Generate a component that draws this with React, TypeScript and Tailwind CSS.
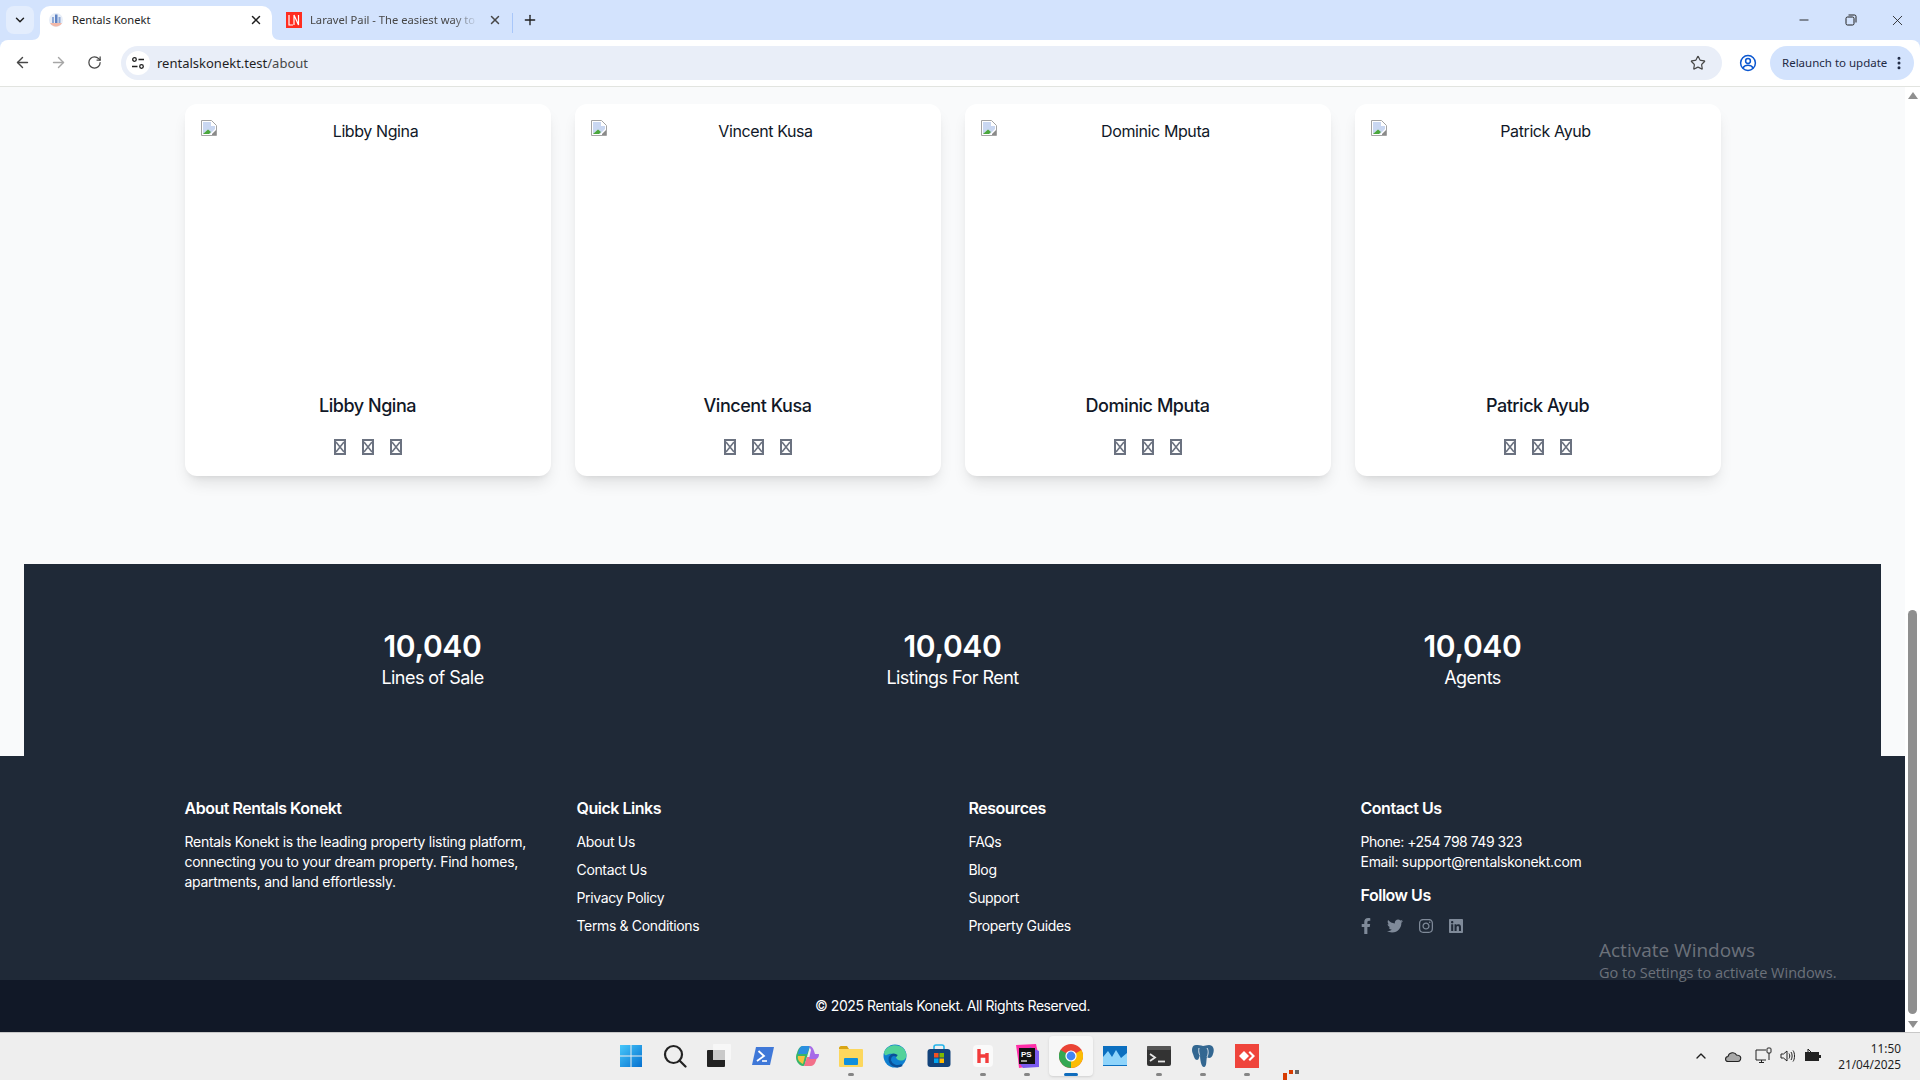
import React from "react";
import { ArrowLeft, ArrowRight, RotateCw, Star, X, Plus, ChevronDown, ChevronUp, Minus, EllipsisVertical } from "lucide-react";
import { FaFacebookF, FaTwitter, FaInstagram, FaLinkedin } from "react-icons/fa";

const people = ["Libby Ngina", "Vincent Kusa", "Dominic Mputa", "Patrick Ayub"];
const stats = [
  ["10,040", "Lines of Sale"],
  ["10,040", "Listings For Rent"],
  ["10,040", "Agents"],
];

function BrokenImage() {
  return (
    <svg width="16" height="16" viewBox="0 0 16 16" className="shrink-0">
      <path d="M0.5 0.5H10.5L15.5 5.5V15.5H0.5Z" fill="#fff" stroke="#a3a3a3" />
      <path d="M2 2H10V6H14V9L9 14H2Z" fill="#c9d7f1" />
      <path d="M2 14L7 9.5L10 12L8 14Z" fill="#4ca83c" />
      <path d="M11 14L15 10V15H11Z" fill="#8a8a8a" />
    </svg>
  );
}

function Tofu() {
  return (
    <svg width="12" height="16" viewBox="0 0 12 16" className="text-[#6b7280]">
      <rect x="1" y="1" width="10" height="14" fill="none" stroke="currentColor" strokeWidth="2" />
      <path d="M2 3L10 13M10 3L2 13" stroke="currentColor" strokeWidth="1.6" />
    </svg>
  );
}

function Card({ name }: { name: string }) {
  return (
    <div className="bg-white rounded-xl shadow-lg p-4 text-center">
      <div className="h-64 flex items-start mb-4">
        <BrokenImage />
        <span className="flex-1 text-base text-gray-900 leading-[23px] tracking-[-0.025em]">{name}</span>
      </div>
      <h3 className="text-lg leading-7 font-medium tracking-[-0.025em] text-[#111827]">{name}</h3>
      <div className="mt-[15px] mb-px h-6 flex items-center justify-center gap-4">
        <Tofu />
        <Tofu />
        <Tofu />
      </div>
    </div>
  );
}

function Stat({ value, label }: { value: string; label: string }) {
  return (
    <div className="text-center text-white">
      <div className="text-3xl leading-9 font-semibold">{value}</div>
      <div className="text-lg leading-7 tracking-[-0.03em]">{label}</div>
    </div>
  );
}

function FooterLinks({ title, links }: { title: string; links: string[] }) {
  return (
    <div>
      <h4 className="text-base leading-6 font-semibold mb-3 tracking-[-0.03em]">{title}</h4>
      <ul className="flex flex-col gap-2 text-sm leading-5 tracking-[-0.025em]">
        {links.map((l) => (
          <li key={l}>{l}</li>
        ))}
      </ul>
    </div>
  );
}

function TabBar() {
  return (
    <div className="h-10 bg-[#d3e3fd] flex items-start font-['Noto_Sans',sans-serif] text-[11.2px]">
      <div className="w-7 h-7 mt-1.5 ml-1.5 rounded-lg bg-[#e3edfd] flex items-center justify-center text-[#1f1f1f]">
        <ChevronDown size={14} strokeWidth={2.5} />
      </div>
      <div className="relative ml-1.5 mt-1.5 w-[232px] h-[34px] bg-white rounded-t-[10px] flex items-center pl-2 pr-[9px] pb-[6px] text-[#1f1f1f]">
        <svg width="8" height="8" viewBox="0 0 8 8" className="absolute -left-2 bottom-0">
          <path d="M8 0V8H0C5 8 8 5 8 0Z" fill="#fff" />
        </svg>
        <svg width="8" height="8" viewBox="0 0 8 8" className="absolute -right-2 bottom-0">
          <path d="M0 0V8H8C3 8 0 5 0 0Z" fill="#fff" />
        </svg>
        <svg width="16" height="16" viewBox="0 0 16 16" className="shrink-0">
          <circle cx="8" cy="8" r="7" fill="#e7edf7" />
          <path d="M2 11a7 7 0 0 0 12 0Z" fill="#f2b8a8" />
          <rect x="4" y="5" width="2" height="6" fill="#8fa9d6" />
          <rect x="7" y="2.5" width="2.5" height="8.5" fill="#5f83c4" />
          <rect x="10.5" y="5" width="2" height="6" fill="#8fa9d6" />
        </svg>
        <span className="ml-2 flex-1">Rentals Konekt</span>
        <X size={14} strokeWidth={2.5} />
      </div>
      <div className="mt-1.5 h-7 ml-3.5 w-[226px] flex items-center text-[#474747]">
        <svg width="16" height="16" viewBox="0 0 16 16" className="shrink-0">
          <rect width="16" height="16" fill="#ff2d20" />
          <path d="M3 3V13H7M8 13V3M8 3L12.5 13V3" fill="none" stroke="#fff" strokeWidth="1.2" />
        </svg>
        <span className="ml-2 w-[168px] whitespace-nowrap [mask-image:linear-gradient(to_right,black_85%,transparent)]">Laravel Pail - The easiest way to</span>
        <X size={14} strokeWidth={2.5} className="ml-[10px]" />
      </div>
      <div className="mt-[13px] h-5 w-px bg-[#a8c7fa]" />
      <Plus size={16} strokeWidth={2} className="ml-[9px] mt-[12px] text-[#1f1f1f]" />
      <div className="ml-auto flex h-10 items-center text-[#1f1f1f]">
        <div className="w-[47px] flex justify-center">
          <Minus size={14} strokeWidth={1.6} />
        </div>
        <div className="w-[47px] flex justify-center">
          <svg width="12" height="12" viewBox="0 0 12 12" fill="none" stroke="currentColor" strokeWidth="1">
            <rect x="1" y="3" width="8" height="8" rx="1.5" />
            <path d="M3.5 1H9.5A1.5 1.5 0 0 1 11 2.5V8.5" />
          </svg>
        </div>
        <div className="w-[46px] flex justify-center">
          <X size={17} strokeWidth={1.2} />
        </div>
      </div>
    </div>
  );
}

function Toolbar() {
  return (
    <div className="h-[47px] bg-[#d3e3fd] font-['Noto_Sans',sans-serif]">
      <div className="h-[47px] bg-white rounded-t-lg border-b border-[#e2e4e0] flex items-center text-[#474747] pb-px">
        <ArrowLeft size={17} strokeWidth={2} className="ml-[14px]" />
        <ArrowRight size={17} strokeWidth={2} className="ml-[19px] text-[#a6a6a6]" />
        <RotateCw size={15} strokeWidth={2} className="ml-[20px]" />
        <div className="ml-[19px] w-[1601px] h-[34px] rounded-full bg-[#e9eef8] flex items-center pl-[5px] pr-[16px]">
          <div className="w-6 h-6 rounded-full bg-white flex items-center justify-center">
            <svg width="14" height="14" viewBox="0 0 14 14" fill="none" stroke="#1f1f1f" strokeWidth="1.3">
              <circle cx="3.5" cy="3.5" r="1.8" />
              <path d="M7.5 3.5H13M1 10.5H6.5" />
              <circle cx="10.5" cy="10.5" r="1.8" />
            </svg>
          </div>
          <span className="ml-[7px] text-[13px] text-[#1f1f1f] translate-y-px">
            rentalskonekt.test<span className="text-[#474747]">/about</span>
          </span>
          <Star size={16} strokeWidth={1.8} className="ml-auto text-[#474747]" />
        </div>
        <svg width="18" height="18" viewBox="0 0 18 18" fill="none" stroke="#0b57d0" strokeWidth="1.5" className="ml-[17px]">
          <circle cx="9" cy="9" r="7.4" />
          <circle cx="9" cy="7" r="2.4" />
          <path d="M3.8 14c1.2-2 3-2.8 5.2-2.8s4 .8 5.2 2.8" />
        </svg>
        <div className="ml-[13px] w-[144px] h-[34px] rounded-full bg-[#d3e3fd] flex items-center pl-3 text-[11.5px] text-[#1f2a44]">
          <span>Relaunch to update</span>
          <EllipsisVertical size={16} strokeWidth={2.5} className="ml-auto mr-[7px]" />
        </div>
      </div>
    </div>
  );
}

function Scrollbar() {
  return (
    <div className="w-[15px] bg-white relative shrink-0">
      <svg width="10" height="7" viewBox="0 0 10 7" className="absolute left-[3px] top-[5px]">
        <path d="M5 0L10 7H0Z" fill="#8f8f8f" />
      </svg>
      <div className="absolute left-[3px] w-[9px] top-[523px] h-[404px] bg-[#8f8f8f] rounded-t-full rounded-b-full" />
      <svg width="10" height="7" viewBox="0 0 10 7" className="absolute left-[3px] bottom-[4px]">
        <path d="M0 0H10L5 7Z" fill="#8f8f8f" />
      </svg>
    </div>
  );
}

const taskIcons: { el: React.ReactNode; dot?: boolean }[] = [
  {
    el: (
      <svg width="24" height="24" viewBox="0 0 24 24">
        <defs>
          <linearGradient id="w" x1="0" y1="0" x2="1" y2="1">
            <stop offset="0" stopColor="#47c8fb" />
            <stop offset="1" stopColor="#0570cf" />
          </linearGradient>
        </defs>
        <path d="M1 1H11.5V11.5H1ZM12.5 1H23V11.5H12.5ZM1 12.5H11.5V23H1ZM12.5 12.5H23V23H12.5Z" fill="url(#w)" />
      </svg>
    ),
  },
  {
    el: (
      <svg width="24" height="24" viewBox="0 0 24 24" fill="none" stroke="#222" strokeWidth="2.2">
        <circle cx="10.5" cy="10.5" r="8.5" />
        <path d="M16.5 16.5L22.5 22.5" strokeLinecap="round" />
      </svg>
    ),
  },
  {
    el: (
      <svg width="24" height="24" viewBox="0 0 24 24">
        <rect x="0" y="6" width="18" height="17" rx="1" fill="#222" />
        <rect x="6" y="0" width="18" height="16" rx="1" fill="#f7f7f7" />
        <rect x="6" y="6" width="12" height="10" fill="#c9c9c9" />
      </svg>
    ),
  },
  {
    el: (
      <svg width="24" height="24" viewBox="0 0 24 24">
        <path d="M5 3H23L19 21H1Z" fill="#3f78d8" />
        <path d="M7.5 7L13 12L6 17" fill="none" stroke="#fff" strokeWidth="1.8" />
        <path d="M11 17H16" stroke="#fff" strokeWidth="1.6" />
      </svg>
    ),
  },
  {
    el: (
      <svg width="24" height="24" viewBox="0 0 24 24">
        <path d="M8 2H15L10 20C9 23 7 22 5 21C1 18 0 13 2 9C3 5 5 2 8 2Z" fill="#35b56b" />
        <path d="M8 2H15L12 10H3C4 5 5 2 8 2Z" fill="#2a8fe0" />
        <path d="M16 22H9L12 13H22C21 18 19 22 16 22Z" fill="#f2708a" />
        <path d="M14 2C17 2 18 4 19 7L20 10H24C24 14 22 15 20 15H14L16 6Z" fill="#a66be8" />
        <path d="M3 12H10L8 20C4 18 2 15 3 12Z" fill="#f5c23e" />
      </svg>
    ),
  },
  {
    dot: true,
    el: (
      <svg width="24" height="24" viewBox="0 0 24 24">
        <path d="M0 4C0 3 1 2 2 2H8L10 5H0Z" fill="#d9a514" />
        <rect y="5" width="24" height="18" rx="1" fill="#fcd75d" />
        <rect x="5" y="14" width="14" height="7" rx="1" fill="#0f8fdc" />
      </svg>
    ),
  },
  {
    el: (
      <svg width="24" height="24" viewBox="0 0 24 24">
        <circle cx="12" cy="12" r="11.5" fill="#0f7fd0" />
        <path d="M1 8C4 1 14 -1 20 4C24 8 24 13 22 15C19 18 13 16 13 13C13 10 9 9 6 10C3 11 1.5 13 1 8Z" fill="#53d29a" />
        <path d="M14 12C10 9 6 12 7 17C8 21 14 24 19 21" fill="none" stroke="#0a4f98" strokeWidth="2.5" />
      </svg>
    ),
  },
  {
    el: (
      <svg width="24" height="24" viewBox="0 0 24 24">
        <path d="M7 6V3C7 1.5 8 1 9 1H15C16 1 17 1.5 17 3V6" fill="none" stroke="#23b4ea" strokeWidth="1.6" />
        <rect x="0.5" y="5" width="23" height="18" rx="3" fill="#12427a" />
        <rect x="7" y="9" width="4.5" height="4.5" fill="#f25022" />
        <rect x="12.5" y="9" width="4.5" height="4.5" fill="#7fba00" />
        <rect x="7" y="14.5" width="4.5" height="4.5" fill="#00a4ef" />
        <rect x="12.5" y="14.5" width="4.5" height="4.5" fill="#ffb900" />
      </svg>
    ),
  },
  {
    dot: true,
    el: (
      <svg width="24" height="24" viewBox="0 0 24 24">
        <rect x="2" y="1" width="20" height="22" rx="4" fill="#fafafa" />
        <path d="M8 5V19M16 9V19M8 12H16" fill="none" stroke="#f23c3c" strokeWidth="3.4" />
      </svg>
    ),
  },
  {
    dot: true,
    el: (
      <svg width="24" height="24" viewBox="0 0 24 24">
        <path d="M1 1L21 0L23 9L22 21L4 24L3 15Z" fill="#ff2fa8" />
        <path d="M15 3L24 7V23L8 24L5 20Z" fill="#7b5cf0" />
        <rect x="4" y="4" width="16" height="16" fill="#111" />
        <path d="M6 17H12" stroke="#fff" strokeWidth="1.2" />
        <text x="6" y="13" fontSize="8" fontWeight="700" fill="#fff" fontFamily="Liberation Sans">PS</text>
      </svg>
    ),
  },
  {
    dot: true,
    el: (
      <svg width="24" height="24" viewBox="0 0 24 24">
        <circle cx="12" cy="12" r="12" fill="#ea4335" />
        <path d="M12 12L22.4 6A12 12 0 0 1 12 24Z" fill="#fbbc04" />
        <path d="M12 12L12 24A12 12 0 0 1 1.6 6Z" fill="#34a853" />
        <circle cx="12" cy="12" r="5.6" fill="#fff" />
        <circle cx="12" cy="12" r="4.4" fill="#4285f4" />
      </svg>
    ),
  },
  {
    el: (
      <svg width="24" height="20" viewBox="0 0 24 20">
        <rect width="24" height="20" fill="#0b6fc0" />
        <path d="M0 19V11L5 5L9 11L13 4L18 12L24 7V19Z" fill="#8ed4fb" />
      </svg>
    ),
  },
  {
    dot: true,
    el: (
      <svg width="24" height="20" viewBox="0 0 24 20">
        <rect width="24" height="20" rx="2" fill="#333" />
        <rect width="24" height="4" rx="1" fill="#555" />
        <path d="M3 8L8 11.5L3 15" fill="none" stroke="#e6e6e6" strokeWidth="1.8" />
        <path d="M11 15.5H18" stroke="#e6e6e6" strokeWidth="1.8" />
      </svg>
    ),
  },
  {
    dot: true,
    el: (
      <svg width="24" height="24" viewBox="0 0 24 24">
        <path d="M5 1C1 1 0 6 2 10C3 13 4 16 6 16C8 16 8 13 9 11C9 15 10 23 13 23C16 23 15 16 16 13C18 15 21 14 22 10C24 5 22 1 18 1C15 1 14 2 12 2C10 1 7 1 5 1Z" fill="#336791" />
        <path d="M8 4C7 8 9 12 9 11M16 4C18 7 17 11 16 13" fill="none" stroke="#fff" strokeWidth="0.8" />
      </svg>
    ),
  },
  {
    dot: true,
    el: (
      <svg width="24" height="24" viewBox="0 0 24 24">
        <rect width="24" height="24" fill="#ef443b" />
        <path d="M9 7L14 12L9 17L4 12Z" fill="#fff" />
        <path d="M15 7L20 12L15 17L13.5 15.5L17 12L13.5 8.5Z" fill="#fff" />
      </svg>
    ),
  },
];

function Taskbar() {
  return (
    <div className="h-12 bg-[#eeeeee] border-t border-[#c8c8c8] flex items-center relative font-['Noto_Sans',sans-serif] pb-[2px]">
      <div className="ml-[609px] flex">
        {taskIcons.map((t, i) => (
          <div key={i} className={`relative w-[44px] h-[40px] flex items-center justify-center rounded ${i === 10 ? "bg-[#f7f7f7] shadow-sm" : ""}`}>
            {t.el}
            {t.dot && i !== 10 && <div className="absolute bottom-0 left-[19px] w-[6px] h-[3px] rounded-full bg-[#858585]" />}
            {i === 10 && <div className="absolute bottom-0 left-[15px] w-[14px] h-[3px] rounded-full bg-[#0f6cbd]" />}
          </div>
        ))}
      </div>
      <svg width="16" height="10" viewBox="0 0 16 10" className="absolute left-[1283px] bottom-0">
        <rect x="0" y="3" width="4" height="7" fill="#d83b01" />
        <rect x="6" y="0" width="4" height="4" fill="#d83b01" />
        <rect x="12" y="0" width="4" height="4" fill="#666" />
      </svg>
      <div className="ml-auto flex items-center text-[#1f1f1f]">
        <ChevronUp size={16} strokeWidth={2} />
        <svg width="18" height="14" viewBox="0 0 18 14" className="ml-[15px]">
          <path d="M4 12.5C1 12.5 .5 8 4 7.5C5 3 11 2.5 12.5 6C16 6 17.5 8 16.5 10.5C16 12 15 12.5 14 12.5Z" fill="#a8a8a8" stroke="#222" strokeWidth="1.1" />
        </svg>
        <svg width="18" height="18" viewBox="0 0 18 18" fill="none" stroke="#222" strokeWidth="1" className="ml-[13px]">
          <path d="M11 3H1V13H11M4 15.5H9M6.5 13V15.5" />
          <rect x="12" y="1" width="4" height="5" rx="1" />
          <path d="M14 6V13" />
        </svg>
        <svg width="16" height="16" viewBox="0 0 16 16" fill="none" stroke="#222" strokeWidth="1" className="ml-[7px]">
          <path d="M1 6V10H3.5L7 13V3L3.5 6Z" />
          <path d="M9 5.5C10 7 10 9 9 10.5M11 4C12.5 6 12.5 10 11 12M13 2.5C15 5 15 11 13 13.5" />
        </svg>
        <svg width="18" height="14" viewBox="0 0 18 14" className="ml-[8px]">
          <rect x="1" y="3" width="14" height="9" fill="#222" />
          <rect x="15" y="6" width="2" height="3" fill="#222" />
          <path d="M4 0V6H1M4 0L7 3" stroke="#222" fill="none" />
        </svg>
        <div className="ml-[16px] mr-[19px] text-right text-[11.8px] leading-4 text-[#1f1f1f]">
          <div>11:50</div>
          <div>21/04/2025</div>
        </div>
      </div>
    </div>
  );
}

export default function App() {
  return (
    <div className="h-screen w-full flex flex-col overflow-hidden">
      <TabBar />
      <Toolbar />
      <div className="flex-1 flex min-h-0 relative">
        <main className="flex-1 bg-[#f9fafb] font-['Inter',sans-serif] tracking-[-0.02em] overflow-hidden">
          <section className="w-[1536px] mx-auto pt-[17px] grid grid-cols-4 gap-6">
            {people.map((p) => (
              <Card key={p} name={p} />
            ))}
          </section>
          <section className="mx-6 mt-[88px] bg-[#1f2937] py-16">
            <div className="w-[1536px] mx-auto grid grid-cols-3 gap-6">
              {stats.map(([v, l]) => (
                <Stat key={l} value={v} label={l} />
              ))}
            </div>
          </section>
          <footer className="text-white">
            <div className="bg-[#1f2937] py-10 h-[224px]">
              <div className="w-[1536px] mx-auto grid grid-cols-4 gap-8">
                <div>
                  <h4 className="text-base leading-6 font-semibold mb-3 tracking-[-0.03em]">About Rentals Konekt</h4>
                  <p className="text-sm leading-5 tracking-[-0.02em]">
                    Rentals Konekt is the leading property listing platform, connecting you to your dream property. Find homes, apartments, and land effortlessly.
                  </p>
                </div>
                <FooterLinks title="Quick Links" links={["About Us", "Contact Us", "Privacy Policy", "Terms & Conditions"]} />
                <FooterLinks title="Resources" links={["FAQs", "Blog", "Support", "Property Guides"]} />
                <div className="tracking-[-0.03em]">
                  <h4 className="text-base leading-6 font-semibold mb-3">Contact Us</h4>
                  <p className="text-sm leading-5">Phone: +254 798 749 323</p>
                  <p className="text-sm leading-5 tracking-[-0.02em]">Email: support@rentalskonekt.com</p>
                  <h4 className="text-base leading-6 font-semibold mt-[11px]">Follow Us</h4>
                  <div className="mt-[11px] flex gap-4 items-center text-[#7f8a99]">
                    <FaFacebookF className="w-[10px] h-4" />
                    <FaTwitter className="w-4 h-4" />
                    <FaInstagram className="w-[14px] h-4" />
                    <FaLinkedin className="w-[14px] h-4" />
                  </div>
                </div>
              </div>
            </div>
            <div className="bg-[#111827] py-4 text-center text-sm leading-5 tracking-[-0.03em]">© 2025 Rentals Konekt. All Rights Reserved.</div>
          </footer>
        </main>
        <Scrollbar />
        <div className="absolute left-[1599px] top-[851px] text-white/35 font-['Open_Sans',sans-serif] pointer-events-none">
          <div className="text-[19px] leading-6">Activate Windows</div>
          <div className="text-[14.5px] leading-5 mt-[1px]">Go to Settings to activate Windows.</div>
        </div>
      </div>
      <Taskbar />
    </div>
  );
}
